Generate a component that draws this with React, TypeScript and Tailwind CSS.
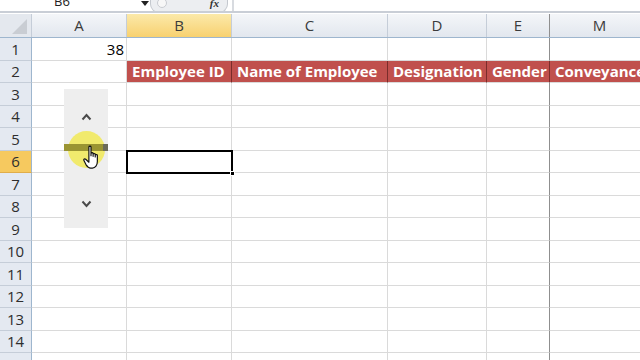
import React from 'react';

const cols = [
  { key: 'A', w: 'w-[95px]' },
  { key: 'B', w: 'w-[105px]' },
  { key: 'C', w: 'w-[156px]' },
  { key: 'D', w: 'w-[99px]' },
  { key: 'E', w: 'w-[63px]' },
  { key: 'M', w: 'w-[100px]' },
];

const headers: Record<string, string> = {
  B: 'Employee ID',
  C: 'Name of Employee',
  D: 'Designation',
  E: 'Gender',
  M: 'Conveyance',
};

const rows = Array.from({ length: 15 }, (_, i) => i + 1);

function Cell({ col, row }: { col: { key: string; w: string }; row: number }) {
  const edge = col.key === 'E' ? 'border-r-[#8f8f8f]' : 'border-r-[#dadada]';
  if (row === 2 && headers[col.key]) {
    return (
      <div
        className={`${col.w} shrink-0 h-full bg-[#c0504d] border-r border-r-[#7a2d2b] border-b border-b-[#dadada] text-white font-bold text-[15px] leading-none flex items-center pl-[5px] whitespace-nowrap`}
      >
        {headers[col.key]}
      </div>
    );
  }
  return (
    <div
      className={`${col.w} shrink-0 h-full bg-white border-r ${edge} border-b border-b-[#dadada] text-[15px] flex items-center justify-end pr-[2px] text-black`}
    >
      {row === 1 && col.key === 'A' ? '38' : ''}
    </div>
  );
}

export default function App() {
  return (
    <div className="w-[640px] h-[360px] overflow-hidden bg-white relative" style={{ fontFamily: '"Open Sans", "Liberation Sans", sans-serif' }}>
      {/* formula bar strip */}
      <div className="h-[13px] flex items-start bg-white border-b-2 border-b-[#c9ced6] overflow-hidden">
        <div className="w-[140px] h-[13px] flex justify-start pl-[54px]">
          <span className="-mt-[8px] text-[13px] text-[#222]">B6</span>
        </div>
        <div className="w-[10px] h-[13px] pt-[1px] pl-[1px]">
          <div className="w-0 h-0 border-l-[4px] border-r-[4px] border-t-[5px] border-l-transparent border-r-transparent border-t-[#222]" />
        </div>
        <div className="w-[78px] h-[13px] rounded-b-[9px] bg-[#eceef1] border border-[#c4c8ce] border-t-0 flex items-start justify-between px-[6px]">
          <span className="-mt-[2px] w-[10px] h-[10px] rounded-full border border-[#c9ccd1] bg-[#f7f7f7]" />
          <span className="-mt-[5px] mr-[2px] text-[11px] italic font-bold text-[#333]" style={{ fontFamily: '"Liberation Serif", serif' }}>fx</span>
        </div>
        <div className="w-[2px] h-[13px] ml-[4px] bg-[#d8dbe0]" />
      </div>

      {/* column headers */}
      <div className="flex h-[24px] border-b border-b-[#9eb6ce] mt-[1px]">
        <div className="w-[32px] shrink-0 h-full bg-[#e4e8ee] border-r border-r-[#c5cdd8] flex items-end justify-end pr-[4px] pb-[3px]">
          <svg width="15" height="15" viewBox="0 0 15 15">
            <polygon points="15,0 15,15 0,15" fill="#c9cdd3" />
          </svg>
        </div>
        {cols.map((c) => (
          <div
            key={c.key}
            className={`${c.w} shrink-0 h-full border-r ${c.key === 'E' ? 'border-r-[#8f8f8f]' : 'border-r-[#c5cdd8]'} flex items-center justify-center text-[15px] ${
              c.key === 'B'
                ? 'bg-gradient-to-b from-[#fbe9a9] to-[#f8d16f] text-[#3b3b3b]'
                : 'bg-gradient-to-b from-[#f4f6f9] to-[#e2e7ee] text-[#3b3b3b]'
            }`}
          >
            {c.key}
          </div>
        ))}
      </div>

      {/* rows */}
      {rows.map((r) => (
        <div key={r} className="flex h-[22.5px]">
          <div
            className={`w-[32px] shrink-0 h-full border-r border-r-[#9eb6ce] border-b flex items-center justify-center text-[15px] text-[#2e2e2e] ${
              r === 6 ? 'bg-[#f6c95f] border-b-[#e0ad4a]' : 'bg-[#e4e9f1] border-b-[#c5cdd8]'
            }`}
          >
            {r}
          </div>
          {cols.map((c) => (
            <Cell key={c.key} col={c} row={r} />
          ))}
        </div>
      ))}

      {/* selected cell B6 */}
      <div className="absolute left-[126px] top-[150px] w-[107px] h-[24px] border-[2px] border-black pointer-events-none">
        <div className="absolute right-[-4px] bottom-[-4px] w-[5px] h-[5px] bg-black border border-white" />
      </div>

      {/* scroll bar form control, floating over the sheet */}
      <div className="absolute left-[64px] top-[89px] w-[44px] h-[139px] bg-[#eeeeee] flex flex-col items-center pt-[24px]">
        <svg width="11" height="8" viewBox="0 0 11 8">
          <path d="M1.5 6.5 L5.5 2 L9.5 6.5" fill="none" stroke="#4a4a4a" strokeWidth="2" />
        </svg>
        <div className="relative w-full h-[75px] mt-[4px]">
          <div className="absolute left-[4px] top-[6px] w-[37px] h-[37px] rounded-full bg-[#f1e94c] opacity-80" />
          <div className="absolute left-0 top-[19px] w-[44px] h-[7px] flex">
            <div className="flex-1 bg-[#9a9432]" />
            <div className="w-[5px] bg-[#6b6b5a]" />
          </div>
          <svg className="absolute left-[19px] top-[20px]" width="20" height="25" viewBox="0 0 17 21">
            <path
              d="M5 1.5 C5 0.7 6.8 0.7 6.8 1.5 L6.8 9 L6.8 7 C6.8 6.2 8.6 6.2 8.6 7 L8.6 9.5 L8.6 7.8 C8.6 7 10.4 7 10.4 7.8 L10.4 10 L10.4 8.6 C10.4 7.8 12.2 7.8 12.2 8.6 L12.2 14 C12.2 17 10.5 19.5 8 19.5 L6.5 19.5 C4.5 19.5 3.5 18 2.5 16.5 L0.8 13 C0.3 12 1.6 11.2 2.3 12 L5 14.5 Z"
              fill="#ffffff"
              stroke="#111"
              strokeWidth="1"
              strokeLinejoin="round"
            />
          </svg>
        </div>
        <svg width="11" height="8" viewBox="0 0 11 8">
          <path d="M1.5 1.5 L5.5 6 L9.5 1.5" fill="none" stroke="#4a4a4a" strokeWidth="2" />
        </svg>
      </div>
    </div>
  );
}
